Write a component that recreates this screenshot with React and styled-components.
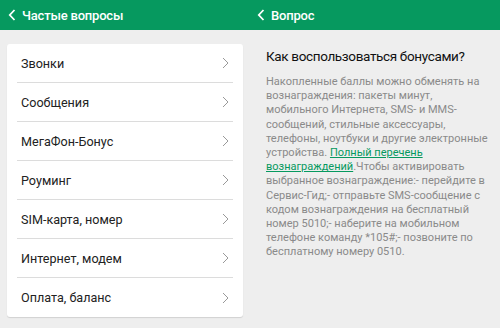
import React from "react";
import styled, { createGlobalStyle } from "styled-components";

const Global = createGlobalStyle`
  html, body { margin: 0; padding: 0; }
  body { background: #eeeeee; font-family: Roboto, "Noto Sans", sans-serif; }
`;

const Screen = styled.div`
  display: flex;
  width: 500px;
  height: 328px;
  overflow: hidden;
  background: #eeeeee;
`;

const Pane = styled.div`
  width: 250px;
  display: flex;
  flex-direction: column;
`;

const Header = styled.div`
  height: 30px;
  background: #06995f;
  display: flex;
  align-items: center;
  gap: 6px;
  padding-left: ${(p) => p.$pad}px;
  color: #fff;
  font-size: 13px;
  letter-spacing: -0.2px;
  font-weight: 500;
`;

const Back = () => (
  <svg width="8" height="12" viewBox="0 0 8 12">
    <path d="M6.5 1 L1.8 6 L6.5 11" fill="none" stroke="#fff" strokeWidth="1.8" />
  </svg>
);

const Card = styled.div`
  margin: 14px 7px 0 7px;
  background: #fff;
  border-radius: 3px;
  box-shadow: 0 1px 1px rgba(0, 0, 0, 0.12);
  display: flex;
  flex-direction: column;
`;

const Row = styled.div`
  height: 39px;
  margin: 0 10px;
  display: flex;
  align-items: center;
  justify-content: space-between;
  padding-left: 4px;
  padding-right: 4px;
  border-bottom: ${(p) => (p.$last ? "none" : "1px solid #dcdcdc")};
  box-sizing: border-box;
  color: #222;
  font-size: 12.6px;
`;

const Chevron = () => (
  <svg width="7" height="12" viewBox="0 0 7 12">
    <path d="M1 1 L6 6 L1 11" fill="none" stroke="#999" strokeWidth="1" />
  </svg>
);

const Article = styled.div`
  padding: 17px 4px 0 16px;
`;

const Title = styled.div`
  font-size: 13.5px;
  letter-spacing: -0.35px;
  color: #111;
  line-height: 18px;
  margin-bottom: 10px;
`;

const Body = styled.div`
  font-size: 11px;
  line-height: 14.2px;
  color: #8a8a8a;
`;

const Line = styled.span`
  display: block;
  white-space: nowrap;
`;

const Link = styled.a`
  color: #06995f;
  text-decoration: underline;
`;

const items = [
  "Звонки",
  "Сообщения",
  "МегаФон-Бонус",
  "Роуминг",
  "SIM-карта, номер",
  "Интернет, модем",
  "Оплата, баланс",
];

export default function App() {
  return (
    <>
      <Global />
      <Screen>
        <Pane>
          <Header $pad={8}>
            <Back />
            Частые вопросы
          </Header>
          <Card>
            {items.map((t, i) => (
              <Row key={t} $last={i === items.length - 1}>
                {t}
                <Chevron />
              </Row>
            ))}
          </Card>
        </Pane>
        <Pane>
          <Header $pad={7}>
            <Back />
            Вопрос
          </Header>
          <Article>
            <Title>Как воспользоваться бонусами?</Title>
            <Body>
              <Line>Накопленные баллы можно обменять на</Line>
              <Line>вознаграждения: пакеты минут,</Line>
              <Line>мобильного Интернета, SMS- и MMS-</Line>
              <Line>сообщений, стильные аксессуары,</Line>
              <Line>телефоны, ноутбуки и другие электронные</Line>
              <Line>
                устройства. <Link>Полный перечень</Link>
              </Line>
              <Line>
                <Link>вознаграждений</Link>.Чтобы активировать
              </Line>
              <Line>выбранное вознаграждение:- перейдите в</Line>
              <Line>Сервис-Гид;- отправьте SMS-сообщение с</Line>
              <Line>кодом вознаграждения на бесплатный</Line>
              <Line>номер 5010;- наберите на мобильном</Line>
              <Line>телефоне команду *105#;- позвоните по</Line>
              <Line>бесплатному номеру 0510.</Line>
            </Body>
          </Article>
        </Pane>
      </Screen>
    </>
  );
}
